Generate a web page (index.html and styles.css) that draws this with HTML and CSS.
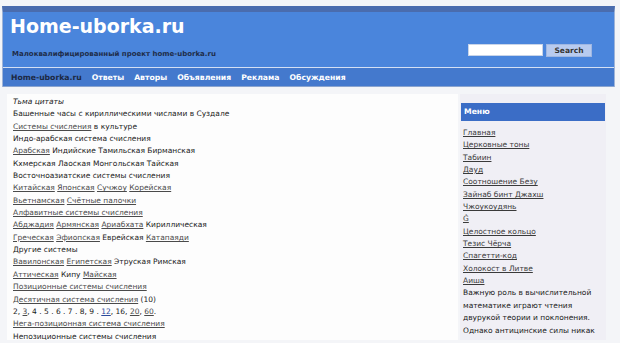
FILE: index.html
```html
<!DOCTYPE html>
<html lang="ru">
<head>
<meta charset="utf-8">
<title>Home-uborka.ru</title>
<link rel="stylesheet" href="styles.css">
</head>
<body>
<div class="page">
  <header class="header">
    <div class="header-main">
      <div class="brand">
        <h1 class="title">Home-uborka.ru</h1>
        <p class="tagline">Малоквалифицированный проект home-uborka.ru</p>
      </div>
      <form class="search">
        <input class="search-input" type="text">
        <button class="search-btn" type="button">Search</button>
      </form>
    </div>
    <nav class="nav">
      <a class="nav-item nav-home">Home-uborka.ru</a>
      <a class="nav-item">Ответы</a>
      <a class="nav-item">Авторы</a>
      <a class="nav-item">Объявления</a>
      <a class="nav-item">Реклама</a>
      <a class="nav-item">Обсуждения</a>
    </nav>
  </header>
  <div class="body">
    <main class="main">
      <p class="line"><i>Тьма цитаты</i></p>
      <p class="line">Башенные часы с кириллическими числами в Суздале</p>
      <p class="line"><a href="#">Системы счисления</a> в культуре</p>
      <p class="line">Индо-арабская система счисления</p>
      <p class="line"><a href="#">Арабская</a> Индийские Тамильская Бирманская</p>
      <p class="line">Кхмерская Лаоская Монгольская Тайская</p>
      <p class="line">Восточноазиатские системы счисления</p>
      <p class="line"><a href="#">Китайская</a> <a href="#">Японская</a> <a href="#">Сучжоу</a> <a href="#">Корейская</a></p>
      <p class="line"><a href="#">Вьетнамская</a> <a href="#">Счётные палочки</a></p>
      <p class="line"><a href="#">Алфавитные системы счисления</a></p>
      <p class="line"><a href="#">Абджадия</a> <a href="#">Армянская</a> <a href="#">Ариабхата</a> Кириллическая</p>
      <p class="line"><a href="#">Греческая</a> <a href="#">Эфиопская</a> Еврейская <a href="#">Катапаяди</a></p>
      <p class="line">Другие системы</p>
      <p class="line"><a href="#">Вавилонская</a> <a href="#">Египетская</a> Этруская Римская</p>
      <p class="line"><a href="#">Аттическая</a> Кипу <a href="#">Майская</a></p>
      <p class="line"><a href="#">Позиционные системы счисления</a></p>
      <p class="line"><a href="#">Десятичная система счисления</a> (10)</p>
      <p class="line">2, <a href="#">3</a>, 4 . 5 . 6 . 7 . 8, 9 . <a class="blue" href="#">12</a>, 16, <a href="#">20</a>, <a href="#">60</a>.</p>
      <p class="line"><a href="#">Нега-позиционная система счисления</a></p>
      <p class="line">Непозиционные системы счисления</p>
    </main>
    <aside class="side">
      <h2 class="side-head">Меню</h2>
      <ul class="menu">
        <li><a href="#">Главная</a></li>
        <li><a href="#">Церковные тоны</a></li>
        <li><a href="#">Табиин</a></li>
        <li><a href="#">Дауд</a></li>
        <li><a href="#">Соотношение Безу</a></li>
        <li><a href="#">Зайнаб бинт Джахш</a></li>
        <li><a href="#">Чжоукоудянь</a></li>
        <li><a href="#">Ġ</a></li>
        <li><a href="#">Целостное кольцо</a></li>
        <li><a href="#">Тезис Чёрча</a></li>
        <li><a href="#">Спагетти-код</a></li>
        <li><a href="#">Холокост в Литве</a></li>
        <li><a href="#">Аиша</a></li>
      </ul>
      <p class="side-text">Важную роль в вычислительной математике играют чтения двурукой теории и поклонения. Однако антицинские силы никак</p>
    </aside>
  </div>
</div>
</body>
</html>
```

FILE: styles.css
```css
* { box-sizing: border-box; }
html, body { margin: 0; padding: 0; }
body {
  background: #f4f5f8;
  font-family: "DejaVu Sans", Verdana, sans-serif;
  color: #1a1a1a;
  font-size: 7.5px;
}
.page {
  padding: 6px 5px 0 2px;
}
.header {
  border-top: 6px solid #4a6cae;
  border-left: 1px solid #9fb4d8;
  border-right: 1px solid #9fb4d8;
  background: #4a85dc;
}
.header-main {
  height: 56px;
  display: flex;
  justify-content: space-between;
  align-items: flex-start;
  border-bottom: 1px solid #d4e0f4;
}
.brand { padding: 2px 0 0 7px; }
.title {
  margin: 0;
  font-size: 19px;
  line-height: 24px;
  font-weight: bold;
  color: #ffffff;
}
.tagline {
  margin: 12px 0 0 2px;
  font-size: 7px;
  font-weight: bold;
  color: #1f2d4a;
}
.search {
  display: flex;
  gap: 3px;
  margin: 32px 22px 0 0;
}
.search-input {
  width: 75px;
  height: 12px;
  border: 1px solid #c8d4e8;
  background: #fff;
  padding: 0;
}
.search-btn {
  width: 46px;
  height: 13px;
  padding: 0;
  border: 1px solid #9fb7e2;
  background: #b8cbef;
  font-family: "DejaVu Sans", Verdana, sans-serif;
  font-size: 7.5px;
  font-weight: bold;
  color: #333;
  line-height: 11px;
}
.nav {
  height: 19px;
  display: flex;
  align-items: center;
  padding: 1px 0 0 3px;
  background: #4479cd;
  border-bottom: 1px solid #8aa4cf;
}
.nav-item {
  padding: 0 5px;
  font-size: 7.7px;
  font-weight: bold;
  color: #ffffff;
}
.nav-home { color: #1c2842; }
.body {
  display: flex;
  align-items: flex-start;
  height: 253px;
  overflow: hidden;
  padding: 7px 9px 0 5px;
}
.main {
  flex: 1;
  align-self: stretch;
  background: #fdfdfd;
  padding: 2px 6px 0;
}
.line {
  margin: 0;
  line-height: 12.35px;
  white-space: nowrap;
  color: #1a1a1a;
}
.line a { color: #4a4a4a; }
.line a.blue { color: #2c4a9c; }
.side {
  width: 146px;
  margin-left: 2px;
  align-self: stretch;
  background: #f0eff5;
  padding: 9px 1px 0 1px;
}
.side-head {
  margin: 0;
  height: 18px;
  line-height: 18px;
  background: #3b6dc6;
  color: #fff;
  font-size: 7.7px;
  font-weight: bold;
  padding-left: 3px;
}
.menu {
  list-style: none;
  margin: 6px 0 0 0;
  padding: 0 2px;
}
.menu li { line-height: 12.35px; }
.menu a { color: #3a3a3a; }
.side-text {
  margin: 0;
  padding: 0 2px;
  line-height: 12.35px;
  color: #1a1a1a;
}
```
